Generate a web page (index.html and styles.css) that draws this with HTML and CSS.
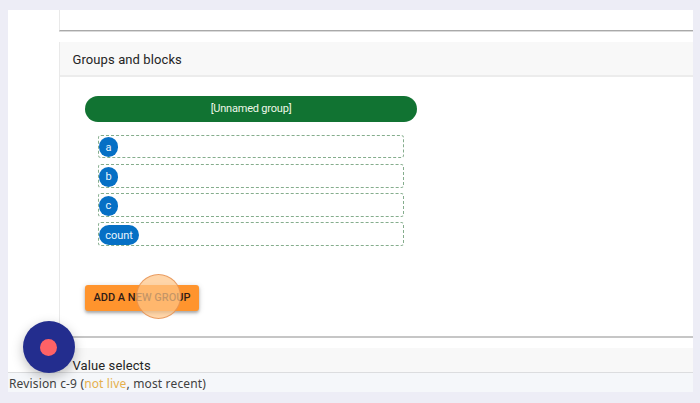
FILE: index.html
```html
<!DOCTYPE html>
<html lang="en">
<head>
<meta charset="utf-8">
<title>Groups and blocks</title>
<link rel="stylesheet" href="styles.css">
</head>
<body>
<main class="app">
  <div class="content">
    <section class="panel panel-previous"></section>
    <section class="panel panel-groups">
      <h2 class="panel-title"><span>Groups and blocks</span></h2>
      <div class="panel-body">
        <div class="group-name"><span>[Unnamed group]</span></div>
        <div class="blocks">
          <div class="slot"><span class="block">a</span></div>
          <div class="slot"><span class="block">b</span></div>
          <div class="slot"><span class="block">c</span></div>
          <div class="slot"><span class="block block-wide">count</span></div>
        </div>
        <button class="add-group"><span>ADD A NEW GROUP</span><i class="click-marker"></i></button>
      </div>
    </section>
    <section class="panel panel-values">
      <h2 class="panel-title"><span>Value selects</span></h2>
    </section>
  </div>
  <footer class="revision"><span class="revision-text">Revision c-9 (<span class="not-live">not live</span>, most recent)</span></footer>
  <div class="record"><i class="record-dot"></i></div>
</main>
</body>
</html>
```
FILE: styles.css
```css
* { box-sizing: border-box; }

body {
  margin: 0;
  height: 403px;
  padding: 10px 7px 11px 8px;
  overflow: hidden;
  background: #ededf6;
  font-family: Roboto, sans-serif;
  color: #252525;
}

.app {
  position: relative;
  display: flex;
  flex-direction: column;
  height: 382px;
  background: #fff;
}

.content {
  height: 362px;
  padding-left: 51px;
  overflow: hidden;
}

.panel { border-left: 1px solid #e9e9e9; }

.panel-previous {
  height: 21px;
  margin-bottom: 11px;
  border-bottom: 1px solid #a9a9a9;
  box-shadow: 0 1px #dadada;
}

.panel-groups {
  height: 296px;
  border-bottom: 2px solid #c6c6c6;
}

.panel-title {
  display: flex;
  align-items: center;
  height: 35px;
  margin: 0;
  padding: 1px 0 0 12.5px;
  background: #f8f8f8;
  border-bottom: 2px solid #ececec;
  font-size: 13px;
  font-weight: 400;
  letter-spacing: 0.1px;
}

.panel-body { padding: 19px 0 0 25px; }

.group-name {
  display: flex;
  align-items: center;
  justify-content: center;
  width: 332px;
  height: 26px;
  padding-bottom: 1px;
  border-radius: 13px;
  background: #117332;
  color: #eef7e9;
  font-size: 11px;
  letter-spacing: -0.2px;
}

.blocks {
  display: flex;
  flex-direction: column;
  gap: 5.5px;
  margin: 12.5px 0 38.5px 13px;
}

.slot {
  display: flex;
  align-items: flex-end;
  width: 306px;
  height: 23.8px;
  border: 1px dashed #85ad8d;
  border-radius: 3px;
}

.block {
  display: flex;
  align-items: center;
  justify-content: center;
  width: 19px;
  height: 20px;
  border-radius: 10px;
  background: #0670c5;
  color: #e8f6ff;
  font-size: 11px;
}

.block-wide {
  width: 40px;
  letter-spacing: -0.1px;
}

.add-group {
  position: relative;
  display: flex;
  align-items: center;
  justify-content: center;
  width: 114px;
  height: 26px;
  padding: 0;
  border: 0;
  border-radius: 3px;
  background: #ff942d;
  box-shadow: 0 2px 3px rgba(0, 0, 0, .28), 0 1px 6px rgba(0, 0, 0, .14);
  color: #301b16;
  font: 500 11px Roboto, sans-serif;
}

.click-marker {
  position: absolute;
  left: 51px;
  top: -11px;
  width: 45px;
  height: 45px;
  border: 1px solid rgba(226, 137, 75, .75);
  border-radius: 50%;
  background: rgba(255, 197, 135, .72);
}

.panel-values { margin-top: 10px; }

.revision {
  display: flex;
  align-items: center;
  height: 20px;
  padding: 1px 0 0 1px;
  border-top: 1px solid #dcdddf;
  background: #f5f7fa;
  color: #414141;
  font: 12px "Noto Sans", sans-serif;
  letter-spacing: 0.15px;
}

.not-live { color: #e5b04d; }

.record {
  position: absolute;
  left: 14.5px;
  top: 311px;
  display: flex;
  align-items: center;
  justify-content: center;
  width: 52px;
  height: 52px;
  border-radius: 50%;
  background: #232d8e;
  box-shadow: 0 4px 12px rgba(0, 0, 0, .25);
}

.record-dot {
  width: 17px;
  height: 17px;
  border-radius: 50%;
  background: #ff6266;
}
```
